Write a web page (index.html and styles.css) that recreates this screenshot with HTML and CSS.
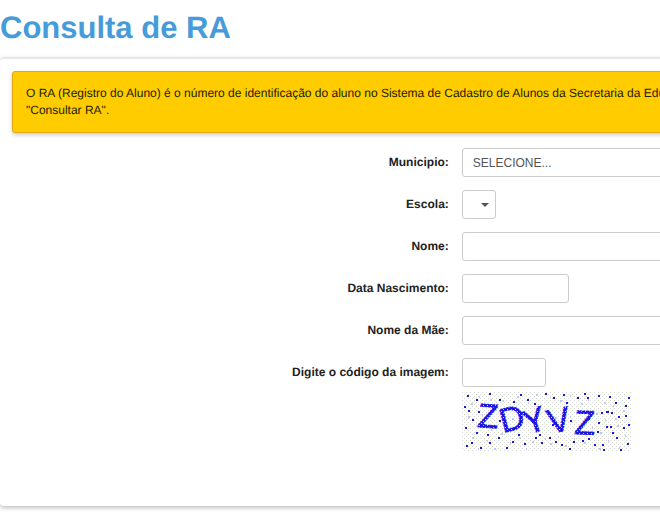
FILE: index.html
```html
<!DOCTYPE html>
<html lang="pt-BR">
<head>
    <meta charset="UTF-8">
    <meta name="viewport" content="width=device-width, initial-scale=1.0">
    <title>Consulta de RA</title>
    <link rel="stylesheet" href="styles.css">
</head>
<body>
    <h1>Consulta de RA</h1>

    <main class="panel">
        <div class="alert">
            O RA (Registro do Aluno) é o número de identificação do aluno no Sistema de Cadastro de Alunos da Secretaria da Edu<br>
            "Consultar RA".
        </div>

        <form class="form">
            <div class="form-row">
                <label for="municipio">Municipio:</label>
                <select id="municipio" class="control">
                    <option>SELECIONE...</option>
                </select>
            </div>
            <div class="form-row">
                <label for="escola">Escola:</label>
                <div class="select-wrap">
                    <select id="escola" class="control"></select>
                </div>
            </div>
            <div class="form-row">
                <label for="nome">Nome:</label>
                <input type="text" id="nome" class="control">
            </div>
            <div class="form-row">
                <label for="nascimento">Data Nascimento:</label>
                <input type="text" id="nascimento" class="control control-date">
            </div>
            <div class="form-row">
                <label for="mae">Nome da Mãe:</label>
                <input type="text" id="mae" class="control">
            </div>
            <div class="form-row">
                <label for="codigo">Digite o código da imagem:</label>
                <input type="text" id="codigo" class="control control-code">
            </div>
            <div class="captcha">
                <svg width="170" height="60" viewBox="0 0 170 60">
                    <defs>
                        <pattern id="grain" width="4" height="4" patternUnits="userSpaceOnUse">
                            <path d="M0 0h1v1h-1zM2 2h1v1h-1z" fill="#d3d8d3"/>
                        </pattern>
                        <pattern id="beads" width="4" height="4" patternUnits="userSpaceOnUse">
                            <rect width="4" height="4" fill="#1a14e6"/>
                            <path d="M1 1h1v1h-1zM3 3h1v1h-1z" fill="#d4d2ff"/>
                        </pattern>
                    </defs>
                    <rect width="170" height="60" fill="#fff"/>
                    <rect width="170" height="60" fill="url(#grain)"/>
                    <!-- faint specks -->
                    <path class="speck-soft" d="M9 12h2M17 5h1M28 8h2M41 9h1M55 5h2M66 11h1M74 3h2M88 5h1M98 9h2M108 4h1M119 12h2M126 8h1M142 11h2M151 14h1M161 19h2M6 25h2M20 23h1M14 34h2M29 38h1M10 46h2M25 49h1M39 42h2M48 51h1M57 46h2M64 57h1M70 50h2M83 47h1M88 52h2M96 45h1M103 54h2M112 47h1M122 51h2M130 36h1M138 41h2M146 49h1M155 34h2M163 44h1M134 22h2M143 28h1M153 27h2M40 24h1M50 27h2M108 25h1M93 26h2M32 57h2M16 57h1M137 57h2M157 56h1"/>
                    <!-- strong specks -->
                    <path class="speck" d="M5 4h2M14 8h2M27 2h2M37 8h2M51 10h2M58 3h2M65 8h2M72 12h2M83 2h2M91 6h2M101 3h2M104 11h2M115 6h2M122 2h2M125 6h2M136 4h2M147 5h2M153 11h2M166 6h2M2 15h2M6 19h2M10 28h2M16 20h2M3 36h2M14 41h2M21 33h2M25 43h2M9 51h2M4 54h2M18 56h2M27 51h2M36 46h2M44 56h2M50 50h2M56 43h2M62 52h2M73 46h2M79 51h2M77 43h2M87 46h2M93 50h2M99 53h2M107 57h2M111 50h2M120 49h2M126 47h2M132 53h2M140 53h2M141 58h2M139 21h2M144 20h3M127 20h2M136 31h2M144 35h2M148 35h2M156 25h2M163 24h2M161 36h2M154 46h2M150 41h2M165 52h2M135 40h2M158 58h2M166 33h2M126 27h2M37 29h2M70 30h2M90 33h2M108 29h2M149 21h2M163 14h2"/>
                    <text class="captcha-text" x="15 41 65 88 112" y="35 41 43 42 42" rotate="4 -15 -18 -12 2">ZDYVZ</text>
                </svg>
            </div>
        </form>
    </main>
</body>
</html>
```
FILE: styles.css
```css
* {
    box-sizing: border-box;
}

body {
    margin: 0;
    padding: 10px 0 20px;
    font-family: "Liberation Sans", Arial, sans-serif;
    font-size: 12px;
    line-height: 17px;
    color: #222;
    background: #fff;
    overflow-x: hidden;
    text-rendering: geometricPrecision;
}

h1 {
    margin: 0 0 11px;
    font-size: 31px;
    line-height: 36px;
    color: #469bd8;
}

.panel {
    margin-right: -24px;
    padding: 12px 0 54px 12px;
    border-top: 2px solid #e7e7e7;
    border-radius: 4px;
    box-shadow: 0 2px 4px rgba(0, 0, 0, 0.25);
}

.alert {
    padding: 13px;
    border: 1px solid #dfa90f;
    border-radius: 3px;
    background: #ffcc00;
    box-shadow: 0 2px 4px rgba(0, 0, 0, 0.2);
    color: #222200;
    white-space: nowrap;
}

.form {
    display: grid;
    gap: 13px;
    margin-top: 15px;
}

.form-row {
    display: grid;
    grid-template-columns: 65% 1fr;
    column-gap: 13px;
    align-items: center;
    justify-items: start;
}

label {
    justify-self: end;
    font-weight: bold;
}

.control {
    display: block;
    width: 100%;
    height: 29px;
    padding: 0 10px;
    border: 1px solid #ccc;
    border-radius: 3px;
    background: #fff;
    font-family: inherit;
    font-size: 12px;
    color: #555;
    appearance: none;
}

.control-date {
    width: 107px;
}

.control-code {
    width: 84px;
}

.select-wrap {
    position: relative;
    width: 34px;
}

.select-wrap::after {
    content: "";
    position: absolute;
    top: 13px;
    right: 7px;
    border: 4px solid transparent;
    border-top-color: #555;
    border-bottom: 0;
    pointer-events: none;
}

.captcha {
    display: grid;
    grid-template-columns: 65% 1fr;
    column-gap: 13px;
    margin-top: -8px;
}

.captcha svg {
    display: block;
    grid-column: 2;
}

.captcha-text {
    font-family: "Liberation Sans", Arial, sans-serif;
    font-size: 34px;
    fill: url(#beads);
    stroke: #1a14e6;
    stroke-width: 1px;
    stroke-dasharray: 2 1;
}

.speck,
.speck-soft {
    fill: none;
    stroke: #1a14e6;
    stroke-width: 2px;
}

.speck-soft {
    stroke: #c9c4f5;
}
```
